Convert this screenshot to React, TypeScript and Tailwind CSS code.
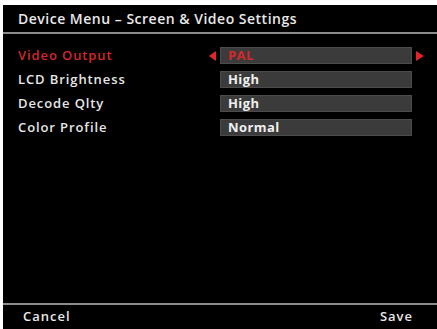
import { useState } from "react";

const rows = [
  { label: "Video Output", value: "PAL" },
  { label: "LCD Brightness", value: "High" },
  { label: "Decode Qlty", value: "High" },
  { label: "Color Profile", value: "Normal" },
];

function Arrow({ dir }: { dir: "left" | "right" }) {
  return (
    <svg width="8" height="10" viewBox="0 0 8 10" className="shrink-0">
      {dir === "left" ? (
        <polygon points="7,0 7,10 0,5" fill="#e0262b" />
      ) : (
        <polygon points="0,0 0,10 8,5" fill="#e0262b" />
      )}
    </svg>
  );
}

export default function App() {
  const [selected] = useState(0);

  return (
    <div className="w-[437px] h-[329px] bg-white pt-[5px] pl-[3px]">
      <div
        className="w-full h-full bg-black flex flex-col text-[#e8e8e8]"
        style={{ fontFamily: '"Open Sans", "DejaVu Sans", sans-serif' }}
      >
        <div className="h-[27px] flex items-center pl-[15px] text-[14px] font-semibold tracking-[0.5px]">
          Device Menu – Screen &amp; Video Settings
        </div>
        <div className="h-[2px] bg-[#8c8c8c]" />

        <div className="flex-1 flex flex-col gap-[7px] pt-[13px]">
          {rows.map((row, i) => {
            const active = i === selected;
            return (
              <div key={row.label} className="flex items-center h-[17px]">
                <div
                  className={`w-[206px] pl-[15px] text-[13px] font-semibold tracking-[0.9px] ${
                    active ? "text-[#d4282d]" : "text-[#e6e6e6]"
                  }`}
                >
                  {row.label}
                </div>
                <div className="w-[11px] flex justify-start">
                  {active && <Arrow dir="left" />}
                </div>
                <div
                  className={`w-[192px] h-[17px] bg-[#3b3b3b] border border-[#4c4c4c] flex items-center pl-[7px] text-[13px] font-bold tracking-[0.4px] ${
                    active ? "text-[#d4282d]" : "text-[#f0f0f0]"
                  }`}
                >
                  {row.value}
                </div>
                <div className="pl-[4px]">{active && <Arrow dir="right" />}</div>
              </div>
            );
          })}
        </div>

        <div className="h-[2px] bg-[#8c8c8c]" />
        <div className="h-[24px] flex items-center justify-between pl-[20px] pr-[24px] text-[13px] font-semibold tracking-[1px]">
          <span>Cancel</span>
          <span>Save</span>
        </div>
      </div>
    </div>
  );
}
